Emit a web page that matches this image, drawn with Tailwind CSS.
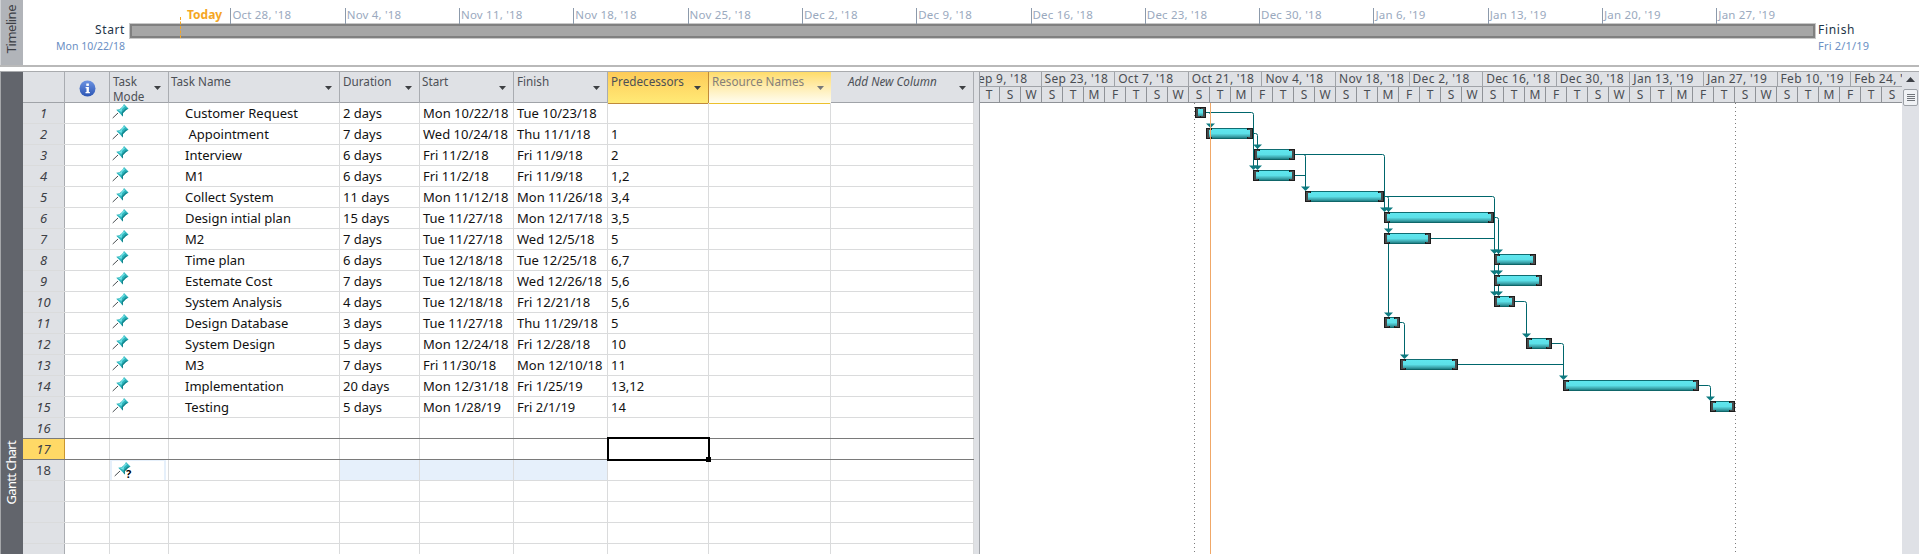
<!DOCTYPE html>
<html lang="en">
<head>
    <meta charset="UTF-8">
    <title>Project - Gantt Chart</title>
    <script src="https://cdn.jsdelivr.net/npm/@tailwindcss/browser@4"></script>
</head>
<body class="h-[554px] w-[1919px] overflow-hidden bg-white text-[13px] text-[#111] font-['Noto_Sans',sans-serif]">
    <!-- Timeline -->
    <section class="flex h-[65px]">
        <div class="w-[23px] shrink-0 bg-[#b1b4b9] border-l border-[#d0d2d5] flex items-center justify-center pb-[6px]">
            <span class="[writing-mode:vertical-rl] rotate-180 text-[13px] tracking-[-0.5px] text-[#3d4046]">Timeline</span>
        </div>
        <div class="w-[107px] shrink-0 pt-[21px] pr-[5px] text-right">
            <div class="text-[12px] leading-[18px] tracking-[0.6px] text-[#1d3448]">Start</div>
            <div class="text-[10.5px] leading-[14px] text-[#6b8fc4]">Mon 10/22/18</div>
        </div>
        <div class="grow-0 shrink-0 w-[1685px] relative pt-[24px]">
            <div id="timeline-ticks"></div>
            <div class="absolute left-[57px] top-[3px] text-[12px] leading-[24px] font-bold text-[#f5a623]">Today</div>
            <div class="absolute left-[50px] top-[17px] h-[21px] border-l border-dashed border-[#f5a623] z-10"></div>
            <div class="h-[14px] bg-[#a6a6a6] border-2 border-[#808080] outline outline-1 outline-[#c8c8c8]"></div>
        </div>
        <div class="pt-[21px] pl-[3px]">
            <div class="text-[12px] leading-[18px] tracking-[0.7px] text-[#1d3448]">Finish</div>
            <div class="text-[11px] leading-[14px] tracking-[0.2px] text-[#6b8fc4]">Fri 2/1/19</div>
        </div>
    </section>
    <div class="h-[2px] bg-[#b9b9b9]"></div>
    <div class="h-[5px] border-b border-[#a9abae]"></div>

    <!-- Gantt view -->
    <section class="flex h-[482px]">
        <div class="w-[23px] shrink-0 bg-[#62656c] border-l border-[#a5a7aa] flex items-end justify-center pb-[50px]">
            <span class="[writing-mode:vertical-rl] rotate-180 text-[13px] tracking-[-0.7px] text-white">Gantt Chart</span>
        </div>

        <!-- Task table -->
        <div class="w-[951px] shrink-0">
            <div class="grid grid-cols-[42px_45px_59px_171px_80px_94px_94px_101px_122px_143px] h-[31px] bg-[#dfe1e5] border-b border-[#a0a3a8] text-[11.7px] leading-[15px] text-[#4c5056]">
                <div class="border-r border-[#a9acb1]"></div>
                <div class="border-r border-[#a9acb1] flex items-center justify-center">
                    <svg width="17" height="17" viewBox="0 0 17 17">
                        <defs><linearGradient id="info" x1="0" y1="0" x2="0" y2="1"><stop offset="0" stop-color="#6d93e2"/><stop offset="1" stop-color="#2b55b4"/></linearGradient></defs>
                        <circle cx="8.5" cy="8.5" r="8" fill="url(#info)"/>
                        <rect x="7.3" y="3.5" width="2.6" height="2.4" fill="#fff"/>
                        <path d="M6.6 7.1h3.3v5h1v1.2H6.5v-1.2h1v-3.8h-.9z" fill="#fff"/>
                    </svg>
                </div>
                <div class="border-r border-[#a9acb1] flex justify-between pl-[3px] pr-[7px] pt-[2px]"><span>Task<br>Mode</span><svg class="mt-[12px]" width="7" height="4"><path d="M0 0h7L3.5 4z" fill="#3d3f43"/></svg></div>
                <div class="border-r border-[#a9acb1] flex justify-between pl-[2px] pr-[7px] pt-[2px]"><span>Task Name</span><svg class="mt-[12px]" width="7" height="4"><path d="M0 0h7L3.5 4z" fill="#3d3f43"/></svg></div>
                <div class="border-r border-[#a9acb1] flex justify-between pl-[3px] pr-[7px] pt-[2px]"><span>Duration</span><svg class="mt-[12px]" width="7" height="4"><path d="M0 0h7L3.5 4z" fill="#3d3f43"/></svg></div>
                <div class="border-r border-[#a9acb1] flex justify-between pl-[2px] pr-[7px] pt-[2px]"><span>Start</span><svg class="mt-[12px]" width="7" height="4"><path d="M0 0h7L3.5 4z" fill="#3d3f43"/></svg></div>
                <div class="border-r border-[#a9acb1] flex justify-between pl-[3px] pr-[7px] pt-[2px]"><span>Finish</span><svg class="mt-[12px]" width="7" height="4"><path d="M0 0h7L3.5 4z" fill="#3d3f43"/></svg></div>
                <div class="border-r border-b border-[#c08a3a] bg-gradient-to-b from-[#fdcb58] to-[#ffea76] flex justify-between pl-[3px] pr-[7px] pt-[2px]"><span>Predecessors</span><svg class="mt-[12px]" width="7" height="4"><path d="M0 0h7L3.5 4z" fill="#3d3f43"/></svg></div>
                <div class="border-b border-[#ecc02c] bg-gradient-to-b from-[#ffdc68] to-[#fffdf0] text-[#85807a] flex justify-between pl-[3px] pr-[7px] pt-[2px]"><span>Resource Names</span><svg class="mt-[12px]" width="7" height="4"><path d="M0 0h7L3.5 4z" fill="#77787a"/></svg></div>
                <div class="border-r border-[#a9acb1] flex justify-between pl-[17px] pr-[7px] pt-[2px] italic"><span>Add New Column</span><svg class="mt-[12px]" width="7" height="4"><path d="M0 0h7L3.5 4z" fill="#3d3f43"/></svg></div>
            </div>
            <div id="rows"></div>
        </div>

        <!-- Splitter -->
        <div class="w-[5px] shrink-0 bg-[#dfe1e5]"></div>

        <!-- Chart -->
        <div class="w-[923px] shrink-0 overflow-hidden border-l border-[#a0a3a8]">
            <div id="tier-top" class="flex h-[15px] -ml-[12px] bg-[#dfe1e5] border-b border-[#a0a3a8] text-[12px] leading-[14px] text-[#4a4d52] tracking-[0.3px]"></div>
            <div id="tier-bottom" class="flex h-[16px] -ml-[1px] bg-[#dfe1e5] border-b border-[#8f9297] text-[12px] leading-[15px] text-[#4a4d52]"></div>
            <div id="chart"></div>
        </div>

        <!-- Scrollbar -->
        <div class="w-[17px] shrink-0 bg-[#dfe1e6] flex flex-col items-center">
            <svg class="mt-[5px]" width="9" height="5"><path d="M4.5 0L9 5H0z" fill="#3d4046"/></svg>
            <div class="mt-[7px] w-[15px] h-[17px] bg-[#f0f2f5] border border-[#9ea2a8] rounded-[2px] flex flex-col items-center justify-center gap-[1px]">
                <div class="w-[8px] h-[1px] bg-[#70747a]"></div>
                <div class="w-[8px] h-[1px] bg-[#70747a]"></div>
                <div class="w-[8px] h-[1px] bg-[#70747a]"></div>
                <div class="w-[8px] h-[1px] bg-[#70747a]"></div>
            </div>
        </div>
    </section>

    <script>
        const tasks = [
            ['Customer Request', '2 days', 'Mon 10/22/18', 'Tue 10/23/18', ''],
            ['\u00a0Appointment', '7 days', 'Wed 10/24/18', 'Thu 11/1/18', '1'],
            ['Interview', '6 days', 'Fri 11/2/18', 'Fri 11/9/18', '2'],
            ['M1', '6 days', 'Fri 11/2/18', 'Fri 11/9/18', '1,2'],
            ['Collect System', '11 days', 'Mon 11/12/18', 'Mon 11/26/18', '3,4'],
            ['Design intial plan', '15 days', 'Tue 11/27/18', 'Mon 12/17/18', '3,5'],
            ['M2', '7 days', 'Tue 11/27/18', 'Wed 12/5/18', '5'],
            ['Time plan', '6 days', 'Tue 12/18/18', 'Tue 12/25/18', '6,7'],
            ['Estemate Cost', '7 days', 'Tue 12/18/18', 'Wed 12/26/18', '5,6'],
            ['System Analysis', '4 days', 'Tue 12/18/18', 'Fri 12/21/18', '5,6'],
            ['Design Database', '3 days', 'Tue 11/27/18', 'Thu 11/29/18', '5'],
            ['System Design', '5 days', 'Mon 12/24/18', 'Fri 12/28/18', '10'],
            ['M3', '7 days', 'Fri 11/30/18', 'Mon 12/10/18', '11'],
            ['Implementation', '20 days', 'Mon 12/31/18', 'Fri 1/25/19', '13,12'],
            ['Testing', '5 days', 'Mon 1/28/19', 'Fri 2/1/19', '14'],
        ];

        const pin = `<svg width="17" height="15" viewBox="0 0 17 15" class="ml-[2px] mt-[1px]">
            <line x1="0.7" y1="14" x2="6" y2="9" stroke="#4a4f52"/>
            <path d="M12 0L16.5 4.6L14 6L12.5 7.5L11 9L11 12.5L4.2 5.7L7.5 5.2L9.5 3.5L11 2z" fill="#2db5bd"/>
            <path d="M12 1L13 2.2L10 5L9.5 8L6 6L8.5 5.5z" fill="#74e4e8"/>
            <path d="M16.5 4.6L14 6L11 9L11 12.5L9.5 11L10 8L13.5 4.5z" fill="#15858c"/>
        </svg>`;

        const cell = 'border-r border-[#dadbdc] truncate pl-[3px] leading-[20px]';
        let rowsHtml = '';
        for (let i = 1; i <= 22; i++) {
            const t = tasks[i - 1];
            const rowBorder = (i === 16 || i === 17) ? 'border-[#7a7a7a]' : 'border-[#dadbdc]';
            const numClass = i === 17
                ? 'bg-[#ffd966] border-r border-[#c9962f] text-center italic text-[#3d4046] leading-[20px]'
                : i === 18
                    ? 'bg-[#dfe1e5] border-r border-[#a9acb1] text-center text-[#3d4046] leading-[20px]'
                    : 'bg-[#dfe1e5] border-r border-[#a9acb1] text-center italic text-[#3d4046] leading-[20px]';
            const blue = i === 18 ? 'bg-[#e6f0fb]' : '';
            let modeCell = t ? pin : '';
            if (i === 18) modeCell = `<div class="relative mr-[2px] h-full border-x-2 border-t border-[#e6f0fb]">${pin}<span class="absolute left-[14px] top-[6px] text-[11px] leading-[14px] font-bold text-black">?</span></div>`;
            const select = i === 17
                ? '<div class="absolute -left-[1px] -top-[2px] w-[103px] h-[24px] border-2 border-black z-10"><div class="absolute -right-[3px] -bottom-[3px] w-[5px] h-[5px] bg-black"></div></div>'
                : '';
            rowsHtml += `<div class="grid grid-cols-[42px_45px_59px_171px_80px_94px_94px_101px_122px_143px] h-[21px] border-b ${rowBorder}">
                <div class="${numClass}">${i <= 18 ? i : ''}</div>
                <div class="${cell}"></div>
                <div class="border-r border-[#dadbdc]">${modeCell}</div>
                <div class="border-r border-[#dadbdc] truncate pl-[16px] leading-[20px]">${t ? t[0] : ''}</div>
                <div class="${cell} ${blue}">${t ? t[1] : ''}</div>
                <div class="${cell} ${blue}">${t ? t[2] : ''}</div>
                <div class="${cell} ${blue}">${t ? t[3] : ''}</div>
                <div class="relative border-r border-[#dadbdc] pl-[3px] leading-[20px]">${t ? t[4] : ''}${select}</div>
                <div class="${cell}"></div>
                <div class="${cell}"></div>
            </div>`;
        }
        document.getElementById('rows').innerHTML = rowsHtml;

        // Timeline ticks, 7 days apart
        const tickLabels = ["Oct 28, '18", "Nov 4, '18", "Nov 11, '18", "Nov 18, '18", "Nov 25, '18", "Dec 2, '18", "Dec 9, '18", "Dec 16, '18", "Dec 23, '18", "Dec 30, '18", "Jan 6, '19", "Jan 13, '19", "Jan 20, '19", "Jan 27, '19"];
        document.getElementById('timeline-ticks').innerHTML = tickLabels.map((label, i) => {
            const left = 100.4 + i * 114.3;
            return `<div class="absolute top-[8px] h-[16px] border-l border-[#8c9aab] pl-[1px] text-[11.5px] leading-[14px] tracking-[0.2px] text-[#9aa9be] whitespace-nowrap" style="left:${left}px">${label}</div>`;
        }).join('');

        // Chart header tiers
        const topLabels = ["Sep 9, '18", "Sep 23, '18", "Oct 7, '18", "Oct 21, '18", "Nov 4, '18", "Nov 18, '18", "Dec 2, '18", "Dec 16, '18", "Dec 30, '18", "Jan 13, '19", "Jan 27, '19", "Feb 10, '19", "Feb 24, '19"];
        document.getElementById('tier-top').innerHTML = topLabels.map(label =>
            `<div class="w-[73.6px] shrink-0 border-r border-[#a0a3a8] pl-[3px] whitespace-nowrap">${label}</div>`
        ).join('');
        const days = ['T', 'S', 'W', 'S', 'T', 'M', 'F'];
        let dayHtml = '';
        for (let i = 0; i < 44; i++) {
            dayHtml += `<div class="w-[21px] shrink-0 border-r border-[#8f9297] text-center">${days[i % 7]}</div>`;
        }
        document.getElementById('tier-bottom').innerHTML = dayHtml;

        // Chart body, in page coordinates shifted by the chart origin
        const ox = 979, oy = 103, rowTop = i => 103 + 21 * i + 4;
        const bars = [[1194, 1205], [1205, 1252], [1253, 1294], [1252, 1294], [1304, 1383], [1383, 1493], [1383, 1430], [1493, 1535], [1493, 1541], [1493, 1514], [1383, 1399], [1525, 1551], [1399, 1457], [1562, 1698], [1709, 1734]];
        const LINK = '#00666c';

        function barSvg([x1, x2], i) {
            const w = x2 - x1;
            return `<g transform="translate(${x1 - ox},${rowTop(i) - oy})">
                <rect width="${w}" height="11" fill="url(#bar)"/>
                <rect width="6" height="11" fill="#1c1c1c"/><rect x="1" y="1" width="4" height="9" fill="#4a4a4a"/><rect x="3" y="2" width="3" height="7" fill="url(#bar)"/>
                <rect x="${w - 6}" width="6" height="11" fill="#1c1c1c"/><rect x="${w - 5}" y="1" width="4" height="9" fill="#4a4a4a"/><rect x="${w - 6}" y="2" width="3" height="7" fill="url(#bar)"/>
            </g>`;
        }
        const link = d => `<path d="${d}" fill="none" stroke="${LINK}" stroke-width="1"/>`;
        const arrow = (x, y) => `<path d="M${x - ox - 4.5} ${y - oy - 4.5}h9L${x - ox} ${y - oy}z" fill="#0d7a80"/>`;
        // horizontal run out of a bar, then down, with a small rounded corner
        const run = (x1, y, x2, y2) => link(`M${x1 - ox} ${y - oy}H${x2 - ox - 2}Q${x2 - ox} ${y - oy} ${x2 - ox} ${y - oy + 2}V${y2 - oy}`);
        const flat = (x1, y, x2) => link(`M${x1 - ox} ${y - oy}H${x2 - ox}`);

        let links = '';
        links += run(1204, 112.5, 1252.5, 167) + run(1204, 112.5, 1209.5, 124);
        links += run(1252, 133.5, 1256.5, 167);
        links += run(1294, 154.5, 1383.5, 209) + run(1294, 154.5, 1304.5, 187);
        links += flat(1294, 175.5, 1304.5);
        links += run(1383, 196.5, 1493.5, 293) + run(1383, 196.5, 1387.5, 313);
        links += run(1493, 217.5, 1497.5, 293);
        links += flat(1430, 238.5, 1493.5);
        links += run(1514, 301.5, 1525.5, 334);
        links += run(1399, 322.5, 1403.5, 355);
        links += run(1551, 343.5, 1562.5, 376) + flat(1457, 364.5, 1562.5);
        links += run(1698, 385.5, 1709.5, 397);

        const arrows = [[1209.5, 128], [1256.5, 149], [1252.5, 170], [1256.5, 170], [1304.5, 191], [1383.5, 212], [1387.5, 212], [1387.5, 233],
            [1493.5, 254], [1497.5, 254], [1493.5, 275], [1497.5, 275], [1493.5, 296], [1497.5, 296], [1387.5, 317], [1525.5, 338], [1403.5, 359], [1562.5, 380], [1709.5, 401]];

        document.getElementById('chart').innerHTML = `<svg width="923" height="451" class="block">
            <defs><linearGradient id="bar" gradientUnits="userSpaceOnUse" x1="0" y1="0" x2="0" y2="11">
                <stop offset="0" stop-color="#0f6d72"/><stop offset="0.09" stop-color="#0f6d72"/>
                <stop offset="0.09" stop-color="#5fe6ee"/><stop offset="0.5" stop-color="#5ce0e8"/>
                <stop offset="0.75" stop-color="#3fa9b0"/><stop offset="0.91" stop-color="#1f8086"/>
                <stop offset="0.91" stop-color="#0f6669"/><stop offset="1" stop-color="#0f6669"/>
            </linearGradient></defs>
            <line x1="${1193.5 - ox}" y1="0" x2="${1193.5 - ox}" y2="451" stroke="#7c7c7c" stroke-dasharray="1 3"/>
            <line x1="${1734.5 - ox}" y1="0" x2="${1734.5 - ox}" y2="451" stroke="#7c7c7c" stroke-dasharray="1 3"/>
            ${links}
            ${bars.map(barSvg).join('')}
            ${arrows.map(a => arrow(a[0], a[1])).join('')}
            <line x1="${1209.5 - ox}" y1="0" x2="${1209.5 - ox}" y2="451" stroke="#f0a868"/>
        </svg>`;
    </script>
</body>
</html>
